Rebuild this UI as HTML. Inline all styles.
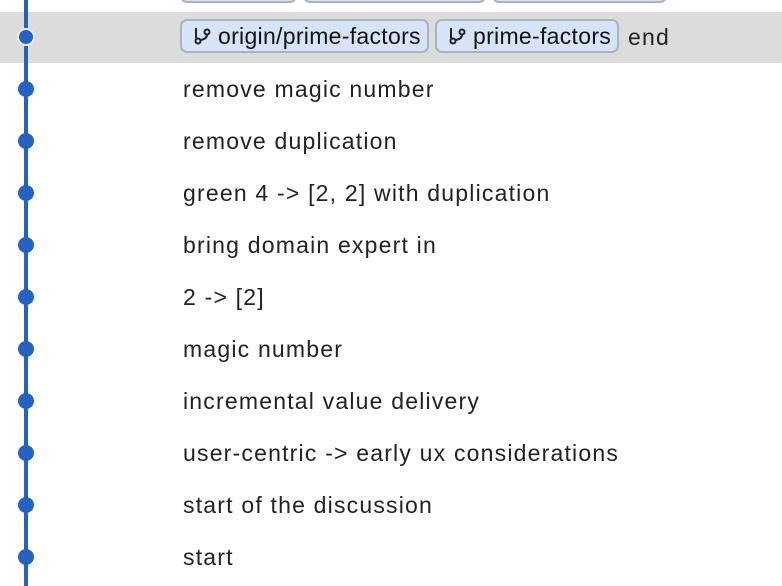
<!DOCTYPE html>
<html><head><style>
body{margin:0;width:782px;height:586px;overflow:hidden;background:#fff;font-family:"Liberation Sans",sans-serif;position:relative}
.line{position:absolute;left:24px;top:0;width:4px;height:586px;background:#2463c4}
.sel{position:absolute;left:0;top:12px;width:782px;height:51px;background:#dcdcdc}
.dot{position:absolute;left:18px;width:16px;height:16px;border-radius:50%;background:#2463c4}
.row{position:absolute;left:183px;font-size:23px;letter-spacing:1.2px;color:#222;line-height:26px}
.b{position:absolute;height:34px;border:2px solid #a9b2c0;border-radius:7px;background:#d6e4fa;box-sizing:border-box;font-size:23px;letter-spacing:0.3px;color:#111;line-height:30px;padding-left:36px;white-space:nowrap}
.b svg{position:absolute;left:11px;top:5px}
</style></head><body>
<div class="sel"></div>
<div class="line"></div>
<div class="b" style="left:180px;top:-31px;width:117px"></div>
<div class="b" style="left:303px;top:-31px;width:183px"></div>
<div class="b" style="left:492px;top:-31px;width:175px"></div>
<div class="b" style="left:180px;top:19px;width:249px"><svg width="18" height="20" viewBox="0 0 18 20" fill="none" stroke="#222" stroke-width="2"><circle cx="5" cy="15" r="2.5"/><circle cx="14" cy="6" r="2.5"/><path d="M3 2v10.5M14 8.5c0 3-2 5-7 5.5"/></svg>origin/prime-factors</div>
<div class="b" style="left:435px;top:19px;width:184px"><svg width="18" height="20" viewBox="0 0 18 20" fill="none" stroke="#222" stroke-width="2"><circle cx="5" cy="15" r="2.5"/><circle cx="14" cy="6" r="2.5"/><path d="M3 2v10.5M14 8.5c0 3-2 5-7 5.5"/></svg>prime-factors</div>
<div class="row" style="left:628px;top:24px">end</div>
<div class="dot" style="left:17px;top:28px;width:14px;height:14px;border:2px solid #eee"></div>
<div class="dot" style="top:81px"></div><div class="row" style="top:76px">remove magic number</div>
<div class="dot" style="top:133px"></div><div class="row" style="top:128px">remove duplication</div>
<div class="dot" style="top:185px"></div><div class="row" style="top:180px">green 4 -&gt; [2, 2] with duplication</div>
<div class="dot" style="top:237px"></div><div class="row" style="top:232px">bring domain expert in</div>
<div class="dot" style="top:289px"></div><div class="row" style="top:284px">2 -&gt; [2]</div>
<div class="dot" style="top:341px"></div><div class="row" style="top:336px">magic number</div>
<div class="dot" style="top:393px"></div><div class="row" style="top:388px">incremental value delivery</div>
<div class="dot" style="top:445px"></div><div class="row" style="top:440px">user-centric -&gt; early ux considerations</div>
<div class="dot" style="top:497px"></div><div class="row" style="top:492px">start of the discussion</div>
<div class="dot" style="top:549px"></div><div class="row" style="top:544px">start</div>
</body></html>
